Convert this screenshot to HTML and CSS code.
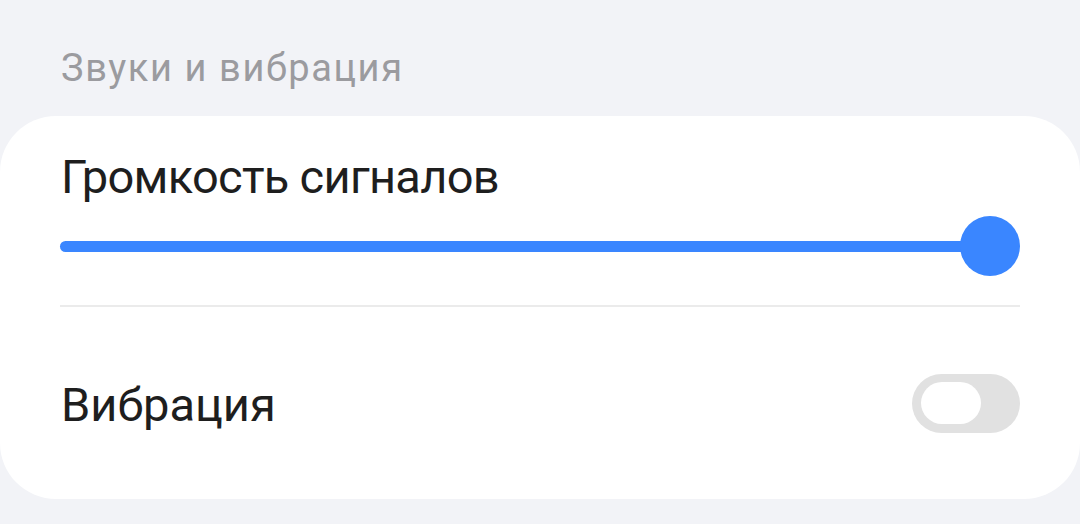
FILE: index.html
```html
<!DOCTYPE html>
<html lang="ru">
<head>
<meta charset="utf-8">
<link rel="stylesheet" href="styles.css">
</head>
<body>
<div class="section-title">Звуки и вибрация</div>
<div class="card">
  <div class="row-volume">
    <div class="label label-volume">Громкость сигналов</div>
    <div class="slider">
      <div class="track"></div>
      <div class="thumb"></div>
    </div>
  </div>
  <div class="divider"></div>
  <div class="row-vibration">
    <div class="label label-vib">Вибрация</div>
    <div class="toggle"><div class="knob"></div></div>
  </div>
</div>
</body>
</html>
```
FILE: styles.css
```css
html, body {
  margin: 0;
  padding: 0;
}
body {
  width: 1080px;
  height: 524px;
  background: #f2f3f7;
  font-family: Roboto, "Noto Sans", sans-serif;
  overflow: hidden;
}
.section-title {
  padding: 45px 0 0 61px;
  height: 116px;
  box-sizing: border-box;
  font-size: 38px;
  line-height: 46px;
  letter-spacing: 1.6px;
  color: #9b9b9f;
}
.card {
  background: #ffffff;
  border-radius: 56px;
  height: 383px;
  padding: 0 60px;
  box-sizing: border-box;
  display: flex;
  flex-direction: column;
}
.label {
  font-size: 47px;
  line-height: 56px;
  color: #1e1e1e;
  padding-left: 1px;
}
.label-volume {
  letter-spacing: -0.7px;
}
.row-volume {
  padding-top: 33px;
}
.slider {
  position: relative;
  height: 60px;
  margin-top: 11px;
  display: flex;
  align-items: center;
}
.track {
  flex: 1;
  height: 11px;
  border-radius: 6px;
  background: #3a86ff;
  margin-right: 30px;
}
.thumb {
  position: absolute;
  right: 0;
  top: 0;
  width: 60px;
  height: 60px;
  border-radius: 50%;
  background: #3a86ff;
}
.divider {
  margin-top: 29px;
  height: 2px;
  background: #ebebeb;
}
.row-vibration {
  flex: 1;
  display: flex;
  align-items: center;
  justify-content: space-between;
}
.label-vib {
  padding-top: 4px;
}
.toggle {
  width: 108px;
  height: 59px;
  border-radius: 30px;
  background: #e1e1e1;
  display: flex;
  align-items: center;
  padding-left: 9px;
  box-sizing: border-box;
}
.knob {
  width: 60px;
  height: 42px;
  border-radius: 21px;
  background: #ffffff;
}
```
